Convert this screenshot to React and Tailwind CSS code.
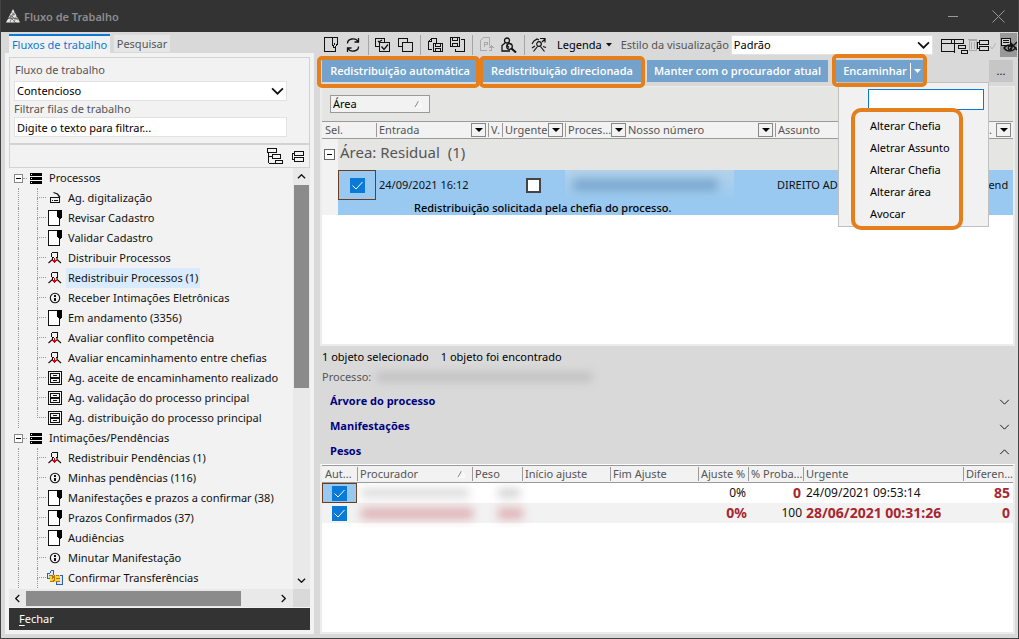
import React from "react";

const svgProps = { fill: "none", stroke: "#111", strokeWidth: 1, shapeRendering: "crispEdges" };

function Icon({ w = 16, h = 16, children, className = "" }) {
  return (
    <svg width={w} height={h} viewBox={`0 0 ${w} ${h}`} className={`shrink-0 ${className}`} aria-hidden="true" {...svgProps}>
      {children}
    </svg>
  );
}

const Stack = () => (
  <Icon w={12} h={11}>
    <path d="M0 0h12v3H0zM0 4h12v3H0zM0 8h12v3H0z" fill="#000" stroke="none" />
    <path d="M1 1.500h1M1 5.500h1M1 9.500h1" stroke="#fff" />
  </Icon>
);
const Scanner = () => (
  <Icon w={18} h={18}>
    <path d="M3.500 8.500h9v5h-9zM5 11.500h1M7 11.500h4" />
    <path d="M6.500 3.500l4 1.500 2.500 3.500" shapeRendering="auto" strokeWidth="1.300" />
  </Icon>
);
const Doc = () => (
  <Icon w={18} h={18}>
    <path d="M1.500 1.500h11v15h-11z" fill="#fff" />
    <path d="M10 1h5v7l-2 2h-1l-2-2z" fill="#000" stroke="none" />
  </Icon>
);
const Person = () => (
  <Icon w={18} h={18}>
    <path d="M5 3.500h6M4.500 4v3M10.500 4v3M5 8.500h2M9 8.500h2M4.500 7v1M10.500 7v1" />
    <path d="M5.500 8.500v2L1.500 14M10 8.500v2l4 3.500" shapeRendering="auto" strokeWidth="1.100" />
    <path d="M7 9h1v2h2v1h-1v1H8v1H7v-1H6v-1H5v-1h2z" fill="#d00" stroke="none" />
  </Icon>
);
const Info = () => (
  <Icon w={18} h={18}>
    <circle cx="8" cy="9" r="4.700" shapeRendering="auto" strokeWidth="1.100" />
    <path d="M7 6h2v2H7zM7 9h2v3H7z" fill="#111" stroke="none" />
  </Icon>
);
const Cabinet = () => (
  <Icon w={18} h={18}>
    <path d="M1.500 2.500h13v13h-13zM3.500 4.500h9v4h-9zM3.500 9.500h9v4h-9zM6 6.500h4M6 11.500h4" />
  </Icon>
);
const Transfer = () => (
  <Icon w={18} h={18}>
    <path d="M.5 7.500v-3h2l2-3h2v8h-6zM9.500 6.500h6v9h-6z" stroke="#2d5fb5" fill="#dce9fb" />
    <path d="M2 6h11v7H3V9H2z" fill="#f6d526" stroke="none" />
    <path d="M2 6.500h3l3 3M8 6.500l-3 3M9 6.500h3M3 12.500h3l2-2M9 9.500h4M9 12.500h4" stroke="#b5741a" />
  </Icon>
);
const TreeExpand = () => (
  <Icon w={16} h={17}>
    <path d="M.5.500h9v4h-9zM5.500 6.500h8v4h-8zM8.500 12.500h7v3h-7zM1.500 5v10M2 15.500h6M2 8.500h3" />
  </Icon>
);
const TreeCollapse = () => (
  <Icon w={13} h={17}>
    <path d="M2.500 3.500h9v4h-9zM2.500 9.500h9v4h-9zM2 5.500H.5v6H2" />
  </Icon>
);

const treeIcons = { scanner: Scanner, doc: Doc, person: Person, info: Info, cabinet: Cabinet, transfer: Transfer };

const groups = [
  {
    title: "Processos",
    items: [
      ["scanner", "Ag. digitalização"],
      ["doc", "Revisar Cadastro"],
      ["doc", "Validar Cadastro"],
      ["person", "Distribuir Processos"],
      ["person", "Redistribuir Processos (1)", true],
      ["info", "Receber Intimações Eletrônicas"],
      ["doc", "Em andamento (3356)"],
      ["person", "Avaliar conflito competência"],
      ["person", "Avaliar encaminhamento entre chefias"],
      ["cabinet", "Ag. aceite de encaminhamento realizado"],
      ["cabinet", "Ag. validação do processo principal"],
      ["cabinet", "Ag. distribuição do processo principal"],
    ],
  },
  {
    title: "Intimações/Pendências",
    open: true,
    items: [
      ["person", "Redistribuir Pendências (1)"],
      ["info", "Minhas pendências (116)"],
      ["doc", "Manifestações e prazos a confirmar (38)"],
      ["doc", "Prazos Confirmados (37)"],
      ["doc", "Audiências"],
      ["info", "Minutar Manifestação"],
      ["transfer", "Confirmar Transferências"],
    ],
  },
];

function Tree() {
  return (
    <ul className="min-w-0 flex-1 overflow-hidden text-[11px] text-[#111]">
      {groups.map((g) => (
        <li key={g.title}>
          <div className="flex h-5 items-center pl-[5px]">
            <button aria-label="Recolher" className="flex size-[9px] items-center justify-center border border-[#888] bg-white">
              <span className="h-px w-[5px] bg-black" />
            </button>
            <span className="mr-[3px] w-[4px] border-b border-dotted border-[#999]" />
            <Stack />
            <span className="ml-[7px]">{g.title}</span>
          </div>
          <ul>
            {g.items.map(([icon, label, selected], i) => {
              const I = treeIcons[icon];
              const last = i === g.items.length - 1 && !g.open;
              return (
                <li key={label} className="flex h-5 items-center pl-[9px]">
                  <span className="h-5 w-[19px] border-l border-dotted border-[#999]" />
                  <span className="mr-px flex h-5 w-[9px] flex-col">
                    <span className="h-[10px] border-b border-l border-dotted border-[#999]" />
                    <span className={last ? "h-[10px]" : "h-[10px] border-l border-dotted border-[#999]"} />
                  </span>
                  <I />
                  <button className={selected ? "ml-px h-5 bg-[#d9ebff] px-[2px] whitespace-nowrap" : "ml-px h-5 px-[2px] whitespace-nowrap"}>
                    {label}
                  </button>
                </li>
              );
            })}
          </ul>
        </li>
      ))}
    </ul>
  );
}

function Chevron({ w = 13, dir = "down", sw = 1.5, className = "" }) {
  const d = { down: "M1 1l5 5 5-5", up: "M1 6l5-5 5 5" }[dir];
  return (
    <svg width={w} height={Math.round((w * 7) / 12)} viewBox="0 0 12 7" fill="none" stroke="#111" strokeWidth={sw} className={`shrink-0 ${className}`} aria-hidden="true">
      <path d={d} />
    </svg>
  );
}

function Combo({ id, value, className }) {
  return (
    <div className={`relative ${className}`}>
      <select id={id} defaultValue={value} className="h-full w-full appearance-none border border-[#e2e2e2] bg-white pl-[2px] text-[11px] text-black">
        <option>{value}</option>
      </select>
      <Chevron className="pointer-events-none absolute top-[6px] right-[3px]" w={13} sw={1.600} />
    </div>
  );
}

function Sidebar() {
  return (
    <aside className="flex w-[309px] shrink-0 flex-col">
      <div role="tablist" className="flex h-[19px] items-start gap-[4px] pl-[4px] text-[11px]">
        <button role="tab" aria-selected="true" className="h-[19px] w-[101px] border-t-2 border-[#0a7ad8] bg-[#f2f2f2] text-center leading-[14px] whitespace-nowrap text-[#0a7ad8]">
          Fluxos de trabalho
        </button>
        <button role="tab" aria-selected="false" className="mt-px h-[17px] w-[56px] bg-[#e6e6e6] leading-4 text-[#555]">
          Pesquisar
        </button>
      </div>
      <div className="flex flex-1 flex-col bg-[#f2f2f2] p-[4px]">
        <div className="flex h-[87px] flex-col border border-[#d2d2d2] pt-[3px] pr-[22px] pl-[4px] text-[11px] text-[#555]">
          <label htmlFor="fluxo" className="h-5 pl-px leading-[18px]">Fluxo de trabalho</label>
          <Combo id="fluxo" value="Contencioso" className="h-[20px]" />
          <label htmlFor="filtro" className="h-4 leading-[15px]">Filtrar filas de trabalho</label>
          <input id="filtro" defaultValue="Digite o texto para filtrar..." className="h-[20px] border border-[#e2e2e2] bg-white px-[2px] text-black" />
        </div>
        <div className="flex h-[24px] items-center justify-end gap-[9px] border border-[#d2d2d2] pr-[4px]">
          <button aria-label="Expandir"><TreeExpand /></button>
          <button aria-label="Recolher tudo"><TreeCollapse /></button>
        </div>
        <div className="flex flex-1">
          <Tree />
          <div className="flex w-[17px] flex-col items-center bg-[#e9e9e9]">
            <button aria-label="Subir" className="flex h-[17px] items-center"><Chevron w={9} dir="up" sw={1.800} /></button>
            <div className="h-[203px] w-[15px] bg-[#8b8b8b]" />
            <button aria-label="Descer" className="mt-auto flex h-[17px] items-center"><Chevron w={9} sw={1.800} /></button>
          </div>
        </div>
        <div className="flex h-[18px] items-center bg-[#e9e9e9]">
          <button aria-label="Esquerda" className="flex w-[17px] justify-center"><Chevron w={9} sw={1.800} className="rotate-90" /></button>
          <div className="h-[15px] w-[215px] bg-[#8b8b8b]" />
          <button aria-label="Direita" className="ml-auto flex w-[17px] justify-center"><Chevron w={9} sw={1.800} className="-rotate-90" /></button>
          <div className="ml-[1px] h-full w-[17px] bg-[#d9d9d9]" />
        </div>
        <button className="mt-px h-[22px] bg-[#333] pt-px pl-[10px] text-left text-[11px] text-white">
          <span className="underline underline-offset-2">F</span>echar
        </button>
      </div>
    </aside>
  );
}

const Sep = () => <span className="-mr-px h-[20px] w-px shrink-0 bg-[#a5a5a5]" />;

function Tool({ label, children }) {
  return (
    <button aria-label={label} className="flex w-[14px] justify-center">
      {children}
    </button>
  );
}

function Toolbar() {
  return (
    <div className="flex h-[22px] items-center pl-[7px] text-[11px]">
      <div className="flex shrink-0 items-center gap-[8px]">
        <Tool label="Novo">
          <Icon w={14} h={16}><path d="M8.500.500h-8v14h11v-4M8.500.500v7l1.500 3h1l2-3v-7zM10.500 6v2" /></Icon>
        </Tool>
        <Tool label="Atualizar">
          <Icon w={14} h={16}>
            <path d="M1.500 6.500a5.500 4.500 0 0 1 10.500-2M12.500 9.500a5.500 4.500 0 0 1-10.500 2M12.500 1v4h-4M1.500 15v-4h4" shapeRendering="auto" strokeWidth="1.300" />
          </Icon>
        </Tool>
        <Sep />
        <Tool label="Selecionar tudo">
          <Icon w={16} h={16}><path d="M3.500 9.500h-3v-8h9v3M4.500 5.500h10v9h-10z" /><path d="M6.500 9.500l2.500 3 4-5M3 4l1 1 3-2" shapeRendering="auto" strokeWidth="1.300" /></Icon>
        </Tool>
        <Tool label="Desmarcar tudo">
          <Icon w={15} h={16}><path d="M4.500 9.500h-4v-8h9v3M4.500 5.500h10v9h-10z" /></Icon>
        </Tool>
        <Sep />
        <Tool label="Salvar visão">
          <Icon w={15} h={16}><path d="M4 12.500H.5v-8l3-3h5v4M3.500 1.500v3h-3M5.500 6.500h9v8h-9zM7.500 6.500v3h5v-3M7.500 14.500v-3h5v3" /></Icon>
        </Tool>
        <Tool label="Carregar visão">
          <Icon w={15} h={16}><path d="M.5.500h9v9h-9zM2.500.5v3h5v-3M2.500 9.500v-3h5v3M11 2.500h3v12h-9v-3" /></Icon>
        </Tool>
        <Sep />
        <Tool label="Protocolar">
          <Icon w={14} h={16}>
            <path d="M7 13.500H.5v-10l3-3h6v8M4.500 10v-5h3v2h-3M8.500 13.500h3v-4M9.500 11l2-2 2 2" stroke="#aaa" />
          </Icon>
        </Tool>
        <Tool label="Localizar pessoa">
          <Icon w={16} h={16}>
            <g shapeRendering="auto" strokeWidth="1.300"><circle cx="6" cy="3.500" r="2.500" /><path d="M4 6L1 8.500v5.500H9M8 6l2.500 1.500M6 8.500l2 2" /><circle cx="8.500" cy="9.500" r="2.800" /><path d="M10.500 11.500l4.500 4" strokeWidth="2" /></g>
          </Icon>
        </Tool>
        <Sep />
        <Tool label="Trocar pessoa">
          <Icon w={16} h={16}>
            <g shapeRendering="auto" strokeWidth="1.200"><circle cx="8" cy="7" r="2.300" /><path d="M6.500 9.500L2.500 14.500M9.500 9.500l4 5M1 7l2-3 3-2 2 1M9 1.500h5v4M14.500 1.500L11 5M1 11l3-2M12 9.500l3 1" /></g>
          </Icon>
        </Tool>
      </div>
      <button className="ml-[11px] flex shrink-0 items-center gap-[4px] text-black">
        Legenda
        <svg width="6" height="4" aria-hidden="true"><path d="M0 0h6L3 3.500z" fill="#111" /></svg>
      </button>
      <label htmlFor="estilo" className="ml-[9px] shrink-0 text-[#555]">Estilo da visualização</label>
      <Combo id="estilo" value="Padrão" className="ml-[2px] h-[20px] min-w-[120px] flex-1" />
      <div className="ml-[8px] flex shrink-0 items-center">
        <button aria-label="Layout"><Icon w={13} h={17}><path d="M.5 2.500h12.500M.5 6.500h12M.5 14.500h12M.5 2v13M10.500 2v5M.5 12.500" strokeWidth="1.200" /></Icon></button>
        <button aria-label="Expandir grade"><Icon w={14} h={17}><path d="M.5 2.500h9v4h-9zM4.500 8.500h7v3h-7zM7.500 13.500h6v3h-6zM.5 6v10" strokeWidth="1.200" /></Icon></button>
        <button aria-label="Excluir"><Icon w={9} h={17}><path d="M1.500 3.500h7v10h-7zM0 2.500h9M3.500 5v7M6.500 5v7" stroke="#aaa" /></Icon></button>
        <button aria-label="Recolher grade"><TreeCollapse /></button>
        <button aria-label="Confirmar"><Icon w={7} h={17}><path d="M0 9l2 3 4-6" stroke="#b5b5b5" shapeRendering="auto" /></Icon></button>
        <button aria-label="Ocultar detalhes" className="mr-px ml-[3px] flex h-[24px] w-[17px] items-center overflow-hidden bg-[#999]">
          <Icon w={17} h={17}>
            <path d="M1.500 1.500h9v7h-9zM3 3.500h6M3 5.500h6" fill="#d0d0d0" />
            <g shapeRendering="auto" strokeWidth="1.300"><path d="M4 11c3-4 8-4 12 0-4 4-9 4-12 0zM10 5l7 8M17 5l-7 7" /><circle cx="10" cy="11" r="1.800" /></g>
          </Icon>
        </button>
      </div>
    </div>
  );
}

const actionClass = "h-[22px] bg-[#73a2cd] pt-px font-['Open_Sans','Noto_Sans',sans-serif] text-[11px] font-semibold whitespace-nowrap text-white";

function Actions() {
  const options = ["Alterar Chefia", "Aletrar Assunto", "Alterar Chefia", "Alterar área", "Avocar"];
  return (
    <div className="mt-[4px] flex h-[26px] items-start pl-[5px]">
      <div className="relative w-[156px]">
        <button className={`${actionClass} w-full`}>Redistribuição automática</button>
        <span className="pointer-events-none absolute -top-[4px] -right-[2px] -bottom-[6px] -left-[5px] rounded-[5px] border-4 border-[#e57f1c]" />
      </div>
      <div className="relative ml-[5px] w-[158px]">
        <button className={`${actionClass} w-full`}>Redistribuição direcionada</button>
        <span className="pointer-events-none absolute -top-[4px] -right-[4px] -bottom-[6px] -left-[4px] rounded-[5px] border-4 border-[#e57f1c]" />
      </div>
      <button className={`${actionClass} ml-[6px] w-[181px]`}>Manter com o procurador atual</button>
      <div className="relative z-10 ml-[8px]">
        <div className="flex h-[22px] w-[87px] bg-[#73a2cd]">
          <button className={`${actionClass} flex-1 pl-[4px]`}>Encaminhar</button>
          <button aria-label="Mais opções" className="my-[3px] flex w-[13px] items-center justify-center border-l border-white">
            <svg width="7" height="4" aria-hidden="true"><path d="M0 0h7L3.500 4z" fill="#fff" /></svg>
          </button>
        </div>
        <div className="absolute top-[22px] left-[2px] h-[145px] w-[151px] border border-[#c0c0c0] bg-[#f1f1f1]">
          <input aria-label="Buscar opção" className="mt-[6px] ml-[29px] h-[21px] w-[116px] border border-[#0a7ad8] bg-white px-1 text-[11px]" />
          <ul className="pl-[28px] text-[11px] text-black">
            {options.map((o, i) => (
              <li key={i} className={i === 0 ? "mt-[5px] h-[22px]" : "h-[22px]"}>
                <button className="h-full px-[3px] leading-[22px]">{o}</button>
              </li>
            ))}
          </ul>
        </div>
        <span className="pointer-events-none absolute -top-[6px] -right-[4px] -bottom-[5px] -left-[4px] rounded-[5px] border-4 border-[#e57f1c]" />
        <span className="pointer-events-none absolute top-[48px] left-[15px] h-[122px] w-[112px] rounded-[10px] border-4 border-[#e57f1c]" />
      </div>
      <button aria-label="Mais" className="mr-[5px] ml-auto h-[22px] w-[24px] bg-[#c6c6c6] text-[11px] text-[#303]">...</button>
    </div>
  );
}

function SortMark() {
  return (
    <svg width="9" height="8" aria-hidden="true" className="shrink-0">
      <path d="M1 7L4.500 1" stroke="#888" fill="none" /><path d="M5 1l3 6H2" stroke="#fff" fill="none" />
    </svg>
  );
}

function Head({ label, drop, sort, first, span, end }) {
  return (
    <th colSpan={span} className="h-[18px] border-y border-[#9a9a9a] bg-[#f2f2f2] p-0 text-left font-normal">
      <div className={first ? "flex h-[14px] items-center pl-[3px]" : "flex h-[14px] items-center border-l border-[#9a9a9a] pl-[2px]"}>
        <span className={end ? "flex-1 pr-1 text-right whitespace-nowrap" : "flex-1 whitespace-nowrap"}>{label}</span>
        {sort && <span className="mr-[6px]"><SortMark /></span>}
        {drop && (
          <button aria-label={`Filtrar ${label}`} className="mr-[2px] flex h-[14px] w-[15px] shrink-0 items-center justify-center border border-[#888]">
            <svg width="8" height="4" aria-hidden="true"><path d="M0 0h8L4 4z" fill="#000" /></svg>
          </button>
        )}
      </div>
    </th>
  );
}

const tick = "size-[15px] appearance-none border border-[#0a7ad8] bg-[#0a7ad8] align-middle";
function Tick({ label }) {
  return (
    <span className="relative mx-auto block size-[15px]">
      <input type="checkbox" defaultChecked aria-label={label} className={`${tick} block`} />
      <svg width="15" height="15" className="pointer-events-none absolute inset-0" fill="none" stroke="#fff" aria-hidden="true"><path d="M2.500 7.500l3.500 3.500 6.500-7" /></svg>
    </span>
  );
}

function MainGrid() {
  return (
    <div className="h-[260px] shrink-0 overflow-hidden border-2 border-t border-[#ececec] bg-white">
      <div className="flex h-[34px] items-center bg-[#e5e5e3] pl-[8px]">
        <button className="flex h-[18px] w-[100px] items-center justify-between border border-[#9a9a9a] bg-[#f2f2f2] pr-[6px] pl-[2px] text-[11px] text-black">
          Área <SortMark />
        </button>
      </div>
      <table className="w-full table-fixed border-separate border-spacing-0 text-[11px] text-[#555]">
        <colgroup>
          <col className="w-[16px]" /><col className="w-[38px]" /><col className="w-[112px]" /><col className="w-[14px]" />
          <col className="w-[63px]" /><col className="w-[60px]" /><col className="w-[150px]" /><col /><col className="w-[62px]" />
        </colgroup>
        <thead>
          <tr>
            <Head label="Sel." first span={2} />
            <Head label="Entrada" drop />
            <Head label="V." />
            <Head label="Urgente" drop />
            <Head label="Proces..." drop />
            <Head label="Nosso número" drop />
            <Head label="Assunto" />
            <Head label="..." drop end />
          </tr>
        </thead>
        <tbody className="text-[#111]">
          <tr className="h-[31px]">
            <td className="bg-[#f2f2f2] p-0 align-bottom">
              <button aria-label="Recolher grupo" className="mb-[10px] ml-[2px] flex size-[11px] items-center justify-center border border-[#666] bg-white">
                <span className="h-px w-[5px] bg-black" />
              </button>
            </td>
            <td colSpan={8} className="bg-[#e5e5e3] p-0 pl-[2px] align-top text-[15px] leading-[26px] whitespace-pre text-[#555]">Área: Residual  (1)</td>
          </tr>
          <tr className="h-[30px] bg-[#99c9f0]">
            <td className="bg-[#f2f2f2] p-0" />
            <td className="border border-[#6b3d1e] p-0"><Tick label="Selecionar" /></td>
            <td className="p-0 pl-[3px] whitespace-nowrap">24/09/2021 16:12</td>
            <td className="p-0" />
            <td className="p-0 pl-[24px]">
              <input type="checkbox" aria-label="Urgente" className="block size-[15px] appearance-none border-2 border-[#444] bg-white" />
            </td>
            <td colSpan={2} className="p-0">
              <div className="flex h-[30px] w-[169px] items-center bg-linear-to-b from-[#b4d2ea] to-[#99c9f0] pl-[8px]">
                <span className="h-[12px] w-[145px] rounded-sm bg-[#7ba7ce] blur-[5px]" />
              </div>
            </td>
            <td className="overflow-hidden p-0 pl-[2px] whitespace-nowrap">DIREITO AD</td>
            <td className="overflow-hidden p-0 pl-[31px] whitespace-nowrap">Vend</td>
          </tr>
          <tr className="h-[15px]">
            <td className="bg-[#f2f2f2] p-0" />
            <td colSpan={8} className="bg-[#99c9f0] p-0 pl-[76px] leading-[15px] font-medium text-black">Redistribuição solicitada pela chefia do processo.</td>
          </tr>
        </tbody>
      </table>
    </div>
  );
}

const strong = "p-0 text-[14px] leading-[18px] font-bold text-[#a8262f]";

function Weights() {
  return (
    <div className="flex-1 overflow-hidden border-2 border-t border-[#ececec] border-t-white bg-white">
      <table className="w-full table-fixed border-separate border-spacing-0 text-[11px] text-[#555]">
        <colgroup>
          <col className="w-[35px]" /><col className="w-[115px]" /><col className="w-[50px]" /><col className="w-[88px]" /><col className="w-[88px]" />
          <col className="w-[50px]" /><col className="w-[55px]" /><col /><col className="w-[50px]" />
        </colgroup>
        <thead>
          <tr>
            <Head label="Aut..." first />
            <Head label="Procurador" sort />
            <Head label="Peso" />
            <Head label="Início ajuste" />
            <Head label="Fim Ajuste" />
            <Head label="Ajuste %" />
            <Head label="% Proba..." />
            <Head label="Urgente" />
            <Head label="Diferen..." />
          </tr>
        </thead>
        <tbody className="text-[12px] leading-[18px] text-[#111]">
          <tr className="h-[20px]">
            <td className="border border-[#6b3d1e] bg-[#99c9f0] p-0"><Tick label="Automático 1" /></td>
            <td className="p-0 pl-[4px]"><span className="block h-[8px] w-[108px] bg-[#d6d6d6] blur-[5px]" /></td>
            <td className="p-0"><span className="ml-[26px] block h-[8px] w-[22px] bg-[#ccc] blur-[5px]" /></td>
            <td className="p-0" /><td className="p-0" />
            <td className="p-0 pr-[2px] text-right">0%</td>
            <td className={`${strong} pr-[2px] text-right`}>0</td>
            <td className="p-0 pl-[3px]">24/09/2021 09:53:14</td>
            <td className={`${strong} pr-[3px] text-right`}>85</td>
          </tr>
          <tr className="h-[20px] bg-[#f2f2f2]">
            <td className="p-0"><Tick label="Automático 2" /></td>
            <td className="p-0 pl-[4px]"><span className="block h-[11px] w-[112px] bg-[#deb0b4] blur-[5px]" /></td>
            <td className="p-0"><span className="ml-[26px] block h-[11px] w-[25px] bg-[#deb0b4] blur-[5px]" /></td>
            <td className="p-0" /><td className="p-0" />
            <td className={`${strong} pr-px text-right`}>0%</td>
            <td className="p-0 pr-px text-right">100</td>
            <td className={`${strong} pl-[3px]`}>28/06/2021 00:31:26</td>
            <td className={`${strong} pr-[3px] text-right`}>0</td>
          </tr>
        </tbody>
      </table>
    </div>
  );
}

function Section({ title, open }) {
  return (
    <button aria-expanded={!!open} className="flex h-[25px] w-full items-center justify-between pr-[5px] pl-[10px] font-['Open_Sans','Noto_Sans',sans-serif] text-[11px] font-bold text-[#000080]">
      {title}
      <Chevron w={11} dir={open ? "up" : "down"} sw={1.100} />
    </button>
  );
}

export default function App() {
  return (
    <div className="flex min-h-screen flex-col border border-t-0 border-[#444] bg-[#d9d9d9] font-['Noto_Sans','Open_Sans',sans-serif] text-[11px]">
      <header className="flex h-[32px] shrink-0 items-center bg-[#333] pl-[5px] text-[#8d8d8d]">
        <svg width="14" height="14" viewBox="0 0 14 14" aria-hidden="true">
          <path d="M7 0l7 13.500H0z" fill="#e6e6e6" />
          <path d="M3 6l9 5M2 9.500h11M5 3l4 3M9 2L4 13M11 6L8 13M1 11l6-6M4 8l6 6" stroke="#555" strokeWidth=".7" fill="none" />
        </svg>
        <h1 className="ml-[4px] pt-[2px] text-[11px] font-semibold">Fluxo de Trabalho</h1>
        <div className="ml-auto flex items-center gap-[34px] pr-[13px]">
          <button aria-label="Minimizar" className="h-px w-[10px] bg-[#999]" />
          <button aria-label="Fechar janela">
            <svg width="13" height="13" fill="none" stroke="#999" aria-hidden="true"><path d="M.5.500l12 12M12.500.500l-12 12" /></svg>
          </button>
        </div>
      </header>
      <div className="flex flex-1 gap-[3px] pt-[2px] pb-[4px] pl-[4px]">
        <Sidebar />
        <main className="flex min-w-0 flex-1 flex-col">
          <Toolbar />
          <Actions />
          <div className="flex flex-1 flex-col pr-[3px] pl-[3px]">
            <MainGrid />
            <p className="mt-[1px] h-[20px] pl-[2px] leading-5 whitespace-pre text-black"><span className="mr-[12px]">1 objeto selecionado</span><span>1 objeto foi encontrado</span></p>
            <div className="mb-[2px] flex h-[20px] items-center pl-[2px] text-[#555]">
              Processo:
              <span className="ml-[6px] h-[8px] w-[215px] bg-[#bcbcbc] blur-[5px]" />
            </div>
            <Section title="Árvore do processo" />
            <Section title="Manifestações" />
            <Section title="Pesos" open />
            <Weights />
          </div>
        </main>
      </div>
    </div>
  );
}
